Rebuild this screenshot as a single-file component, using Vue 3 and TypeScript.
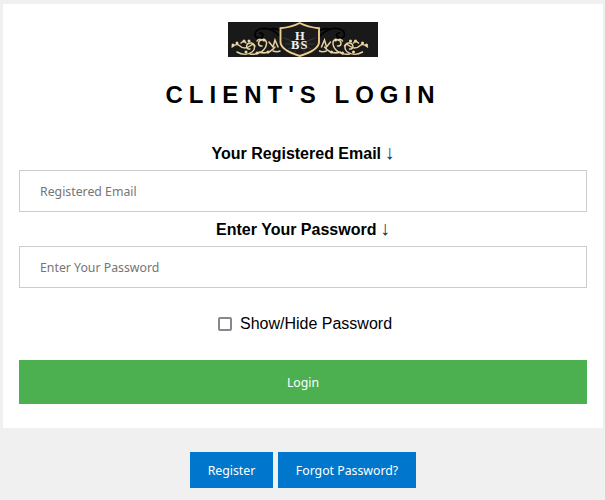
<script setup lang="ts">
import { ref } from 'vue'
const email = ref('')
const password = ref('')
const show = ref(false)
const scrolls = [
  'M4 25c3-3 6-3 8-1s6 3 10 0c2-2 4-2 5 0',
  'M9 30c5 3 11 3 15 0s3-10-2-9-4 7 0 6',
  'M22 32c7 1 14-2 16-8s-2-7-5-6-4 6 1 6',
  'M31 30c6 2 12 0 16-5',
  'M41 20l4 5 2-7 3 7',
  'M45 29c3 1 5 1 7 0',
  'M13 21c2-2 4-2 5 0',
  'M29 19c1-2 3-2 4-1',
]
const dots: [number, number][] = [[5, 23], [9, 21], [16, 19], [21, 19], [18, 30], [29, 31], [40, 30], [36, 18]]
const blackScrolls = [
  'M53 15c-6-6-14-10-21-8s-6 9-1 9 5-5 1-5',
  'M53 9c-4-2-7-3-10-2',
]
const rays = ['M71.750 22 56 16', 'M71.750 22 57 22', 'M71.750 22 60 27', 'M71.750 22 87.500 16', 'M71.750 22 86.500 22', 'M71.750 22 83.500 27', 'M71.750 22 66 31', 'M71.750 22 77.500 31']
</script>

<template>
  <div class="page">
    <main class="card">
      <svg class="logo" viewBox="0 0 150 35" role="img" aria-label="HBS">
        <rect width="150" height="35" fill="#191919" />
        <g filter="url(#soft)">
          <g fill="none" stroke-linecap="round">
            <g stroke="#050505" stroke-width="1.800">
              <path v-for="d in blackScrolls" :key="d" :d="d" />
              <path v-for="d in blackScrolls" :key="d + 'r'" :d="d" transform="matrix(-1 0 0 1 143.500 0)" />
            </g>
            <g stroke="#e8d19e" stroke-width="1.500">
              <path v-for="d in scrolls" :key="d" :d="d" />
              <path v-for="d in scrolls" :key="d + 'r'" :d="d" transform="matrix(-1 0 0 1 143.500 0)" />
            </g>
          </g>
          <g fill="#efd9a8">
            <circle v-for="p in dots" :key="p.join()" :cx="p[0]" :cy="p[1]" r="1.500" />
            <circle v-for="p in dots" :key="p.join() + 'r'" :cx="143.500 - p[0]" :cy="p[1]" r="1.500" />
          </g>
          <path d="M71.750 1C66 4 60 5.500 52.500 6.200V20c0 6 8 10.500 19.250 14C83 30.500 91 26 91 20V6.200C83.500 5.500 77.500 4 71.750 1Z" fill="#1d1d1d" stroke="#eccd8c" stroke-width="1.900" />
          <g stroke="#4a4a4a" stroke-width=".6">
            <path v-for="d in rays" :key="d" :d="d" />
          </g>
        </g>
        <text class="mono" text-anchor="middle"><tspan x="71.750" y="17.500">H</tspan><tspan x="71.750" y="26.500" class="wide">BS</tspan></text>
        <defs>
          <filter id="soft"><feGaussianBlur stdDeviation="0.25" /></filter>
        </defs>
      </svg>
      <h1 class="title">CLIENT'S LOGIN</h1>
      <form class="form" @submit.prevent>
        <label class="label" for="email">Your Registered Email <span class="arrow">↓</span></label>
        <input id="email" v-model="email" class="field" type="text" placeholder="Registered Email" />
        <label class="label" for="password">Enter Your Password <span class="arrow">↓</span></label>
        <input id="password" v-model="password" class="field" :type="show ? 'text' : 'password'" placeholder="Enter Your Password" />
        <label class="toggle">
          <input v-model="show" class="check" type="checkbox" />
          <span>Show/Hide Password</span>
        </label>
        <button class="login" type="submit">Login</button>
      </form>
    </main>
    <nav class="links">
      <a class="link first" href="#">Register</a>
      <a class="link" href="#">Forgot Password?</a>
    </nav>
  </div>
</template>

<style>
html, body { margin: 0; background: #f0f0f0; }
</style>

<style scoped>
.page {
  height: 500px;
  box-sizing: border-box;
  padding: 4px 2px 0 3px;
  background: #f0f0f0;
  overflow: hidden;
  font-family: "Liberation Sans", Arial, sans-serif;
}
.card {
  height: 424px;
  box-sizing: border-box;
  padding: 18px 16px 0;
  background: #fff;
  display: flex;
  flex-direction: column;
  align-items: center;
}
.logo { display: block; width: 150px; height: 35px; flex: none; }
.mono {
  font-family: "Liberation Serif", serif;
  font-size: 12.500px;
  font-weight: 700;
  fill: #f2f2f2;
}
.wide { letter-spacing: 1px; }
.title {
  margin: 24px 0 0;
  height: 28px;
  font-size: 24px;
  line-height: 28px;
  font-weight: 700;
  letter-spacing: 6px;
  color: #000;
  white-space: nowrap;
}
.form {
  width: 100%;
  margin-top: 33px;
  display: flex;
  flex-direction: column;
  align-items: center;
}
.label {
  height: 22px;
  font-size: 16px;
  line-height: 22px;
  font-weight: 700;
  color: #000;
  display: block;
  margin-top: 6px;
}
.form .label:first-child { margin-top: 0; }
.arrow { font-weight: 400; color: #12395f; font-size: 20px; line-height: 20px; margin-left: -1px; }
.field {
  width: 100%;
  height: 42px;
  box-sizing: border-box;
  margin-top: 6px;
  padding: 0 20px;
  border: 1px solid #ccc;
  border-radius: 0;
  outline: none;
  background: #fff;
  font-family: "Noto Sans", Tahoma, sans-serif;
  font-size: 12.300px;
  color: #333;
}
.field::placeholder { color: #757575; opacity: 1; }
.toggle {
  margin-top: 24px;
  padding-left: 4px;
  height: 24px;
  display: flex;
  align-items: center;
  gap: 8px;
  font-size: 16px;
  color: #000;
}
.check {
  appearance: none;
  width: 14px;
  height: 14px;
  margin: 0;
  box-sizing: border-box;
  border: 2px solid #86868f;
  border-radius: 2px;
  background: #fff;
}
.check:checked { background: #0075ff; border-color: #0075ff; }
.login {
  width: 100%;
  height: 44px;
  margin-top: 24px;
  border: 0;
  background: #4caf50;
  color: #fff;
  font-family: "Noto Sans", Tahoma, sans-serif;
  font-size: 12.300px;
}
.links {
  margin-top: 24px;
  display: flex;
  justify-content: center;
  gap: 5px;
}
.link {
  width: 138px;
  height: 36px;
  box-sizing: border-box;
  display: flex;
  align-items: center;
  justify-content: center;
  background: #0077cc;
  color: #fff;
  text-decoration: none;
  font-family: "Noto Sans", Tahoma, sans-serif;
  font-size: 12.300px;
}
.first { width: 83px; }
</style>
